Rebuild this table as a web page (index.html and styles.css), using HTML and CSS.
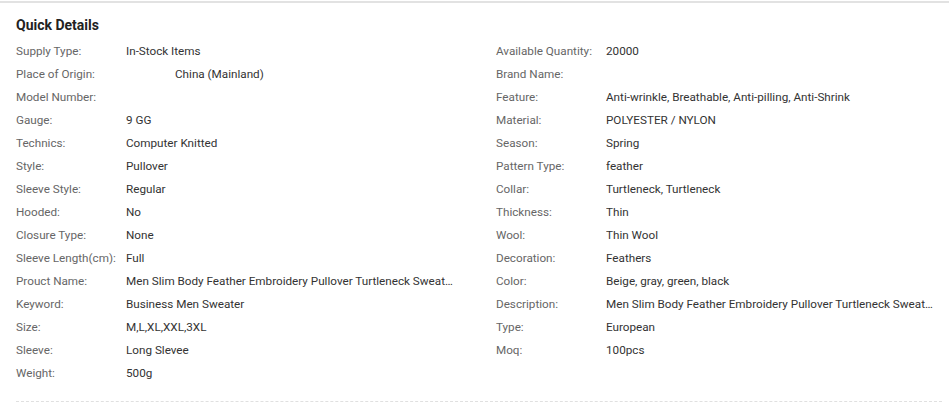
FILE: index.html
```html
<!DOCTYPE html>
<html>
<head>
<meta charset="utf-8">
<link rel="stylesheet" href="styles.css">
</head>
<body>
<div class="panel">
  <h2 class="title">Quick Details</h2>
  <div class="grid">
    <div class="col">
      <div class="row"><span class="lbl">Supply Type:</span><span class="val">In-Stock Items</span></div>
      <div class="row"><span class="lbl">Place of Origin:</span><span class="val indent">China (Mainland)</span></div>
      <div class="row"><span class="lbl">Model Number:</span><span class="val"></span></div>
      <div class="row"><span class="lbl">Gauge:</span><span class="val">9 GG</span></div>
      <div class="row"><span class="lbl">Technics:</span><span class="val">Computer Knitted</span></div>
      <div class="row"><span class="lbl">Style:</span><span class="val">Pullover</span></div>
      <div class="row"><span class="lbl">Sleeve Style:</span><span class="val">Regular</span></div>
      <div class="row"><span class="lbl">Hooded:</span><span class="val">No</span></div>
      <div class="row"><span class="lbl">Closure Type:</span><span class="val">None</span></div>
      <div class="row"><span class="lbl">Sleeve Length(cm):</span><span class="val">Full</span></div>
      <div class="row"><span class="lbl">Prouct Name:</span><span class="val">Men Slim Body Feather Embroidery Pullover Turtleneck Sweater Men</span></div>
      <div class="row"><span class="lbl">Keyword:</span><span class="val">Business Men Sweater</span></div>
      <div class="row"><span class="lbl">Size:</span><span class="val">M,L,XL,XXL,3XL</span></div>
      <div class="row"><span class="lbl">Sleeve:</span><span class="val">Long Slevee</span></div>
      <div class="row"><span class="lbl">Weight:</span><span class="val">500g</span></div>
    </div>
    <div class="col">
      <div class="row"><span class="lbl">Available Quantity:</span><span class="val">20000</span></div>
      <div class="row"><span class="lbl">Brand Name:</span><span class="val"></span></div>
      <div class="row"><span class="lbl">Feature:</span><span class="val">Anti-wrinkle, Breathable, Anti-pilling, Anti-Shrink</span></div>
      <div class="row"><span class="lbl">Material:</span><span class="val">POLYESTER / NYLON</span></div>
      <div class="row"><span class="lbl">Season:</span><span class="val">Spring</span></div>
      <div class="row"><span class="lbl">Pattern Type:</span><span class="val">feather</span></div>
      <div class="row"><span class="lbl">Collar:</span><span class="val">Turtleneck, Turtleneck</span></div>
      <div class="row"><span class="lbl">Thickness:</span><span class="val">Thin</span></div>
      <div class="row"><span class="lbl">Wool:</span><span class="val">Thin Wool</span></div>
      <div class="row"><span class="lbl">Decoration:</span><span class="val">Feathers</span></div>
      <div class="row"><span class="lbl">Color:</span><span class="val">Beige, gray, green, black</span></div>
      <div class="row"><span class="lbl">Description:</span><span class="val">Men Slim Body Feather Embroidery Pullover Turtleneck Sweater Men</span></div>
      <div class="row"><span class="lbl">Type:</span><span class="val">European</span></div>
      <div class="row"><span class="lbl">Moq:</span><span class="val">100pcs</span></div>
    </div>
  </div>
  <div class="divider"></div>
</div>
</body>
</html>
```

FILE: styles.css
```css
html, body {
  margin: 0;
  padding: 0;
  background: #fff;
}
body {
  font-family: Roboto, "Liberation Sans", sans-serif;
  font-size: 11.7px;
  color: #333;
}
.panel {
  border-top: 2px solid #e2e2e2;
  margin-top: 1px;
  padding: 0 7px 0 16px;
}
.title {
  margin: 0;
  padding-top: 13px;
  height: 24px;
  line-height: 18px;
  font-size: 14px;
  font-weight: 700;
  color: #222;
}
.grid {
  display: grid;
  grid-template-columns: 480px 1fr;
}
.row {
  display: flex;
  height: 23px;
  line-height: 23px;
}
.lbl {
  flex: 0 0 110px;
  color: #666;
  white-space: nowrap;
}
.val {
  width: 332px;
  white-space: nowrap;
  overflow: hidden;
  text-overflow: ellipsis;
  color: #333;
}
.indent {
  padding-left: 49px;
  width: 283px;
}
.divider {
  margin-top: 16px;
  border-top: 1px dashed #e0e0e0;
}
```
